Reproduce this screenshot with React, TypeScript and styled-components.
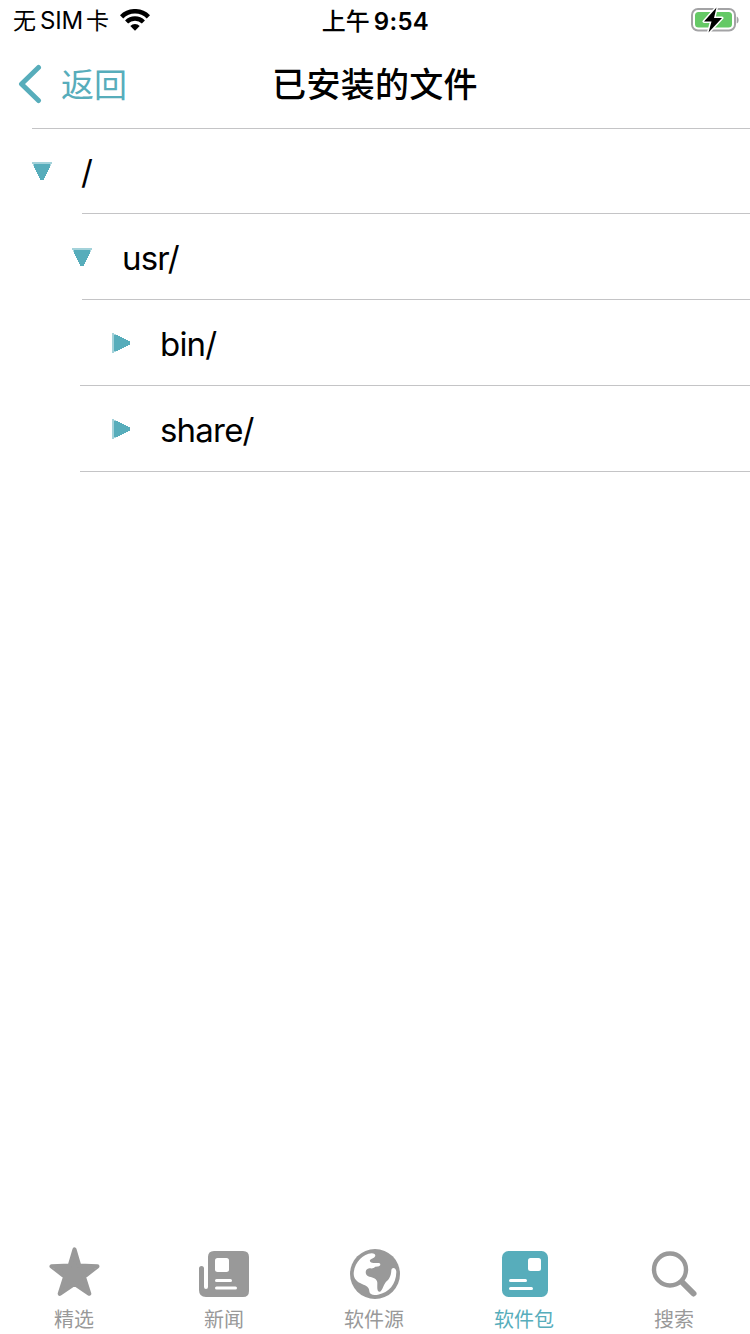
import React from "react";
import styled, { createGlobalStyle } from "styled-components";

const TEAL = "#57adbb";
const GRAY = "#999999";

const GlobalStyle = createGlobalStyle`
  * { box-sizing: border-box; }
  body { margin: 0; background: #fff; }
`;

const Screen = styled.div`
  width: 750px;
  height: 1334px;
  display: flex;
  flex-direction: column;
  background: #fff;
  color: #000;
  overflow: hidden;
  font-family: Inter, "Noto Sans CJK SC", sans-serif;
`;

const StatusBar = styled.header`
  height: 40px;
  display: grid;
  grid-template-columns: 1fr auto 1fr;
  align-items: center;
  padding: 0 11px 0 13px;
  line-height: 40px;
`;

const Carrier = styled.div`
  display: flex;
  align-items: center;
  font-size: 23px;
  padding-top: 1px;
  svg { margin: -2px 0 0 11px; }
`;

const Latin = styled.span`
  font-size: 24px;
  letter-spacing: -0.2px;
  margin: 0 3px 0 4px;
`;

const Clock = styled.div`
  font-size: 24px;
  font-weight: 500;
  padding-top: 1px;
  margin-left: -1px;
  height: 40px;
`;

const ClockDigits = styled.span`
  font-weight: 600;
  letter-spacing: 0.3px;
  margin-left: 4px;
`;

const Battery = styled.div`
  justify-self: end;
  display: flex;
  margin-top: -1px;
`;

const NavBar = styled.nav`
  height: 88px;
  display: grid;
  grid-template-columns: 1fr auto 1fr;
  align-items: center;
  padding: 0 17px;
`;

const BackButton = styled.button`
  display: flex;
  align-items: center;
  gap: 19px;
  padding: 0;
  border: 0;
  background: none;
  color: ${TEAL};
  font: inherit;
  font-size: 33px;
  line-height: 50px;
`;

const BackLabel = styled.span`
  padding-top: 1px;
`;

const Title = styled.h1`
  margin: 0;
  padding-top: 2px;
  font-size: 34px;
  font-weight: 500;
  letter-spacing: 0.3px;
  line-height: 50px;
`;

const FileList = styled.ul`
  flex: 1;
  margin: 0;
  padding: 0;
  list-style: none;
`;

const TopRule = styled.li`
  height: 1px;
  margin-left: 32px;
  background: #c4c4c6;
`;

const Row = styled.li<{ $rule: number; $height: number }>`
  height: ${(p) => p.$height}px;
  display: flex;
  flex-direction: column;
  &::after {
    content: "";
    height: 1px;
    margin-left: ${(p) => p.$rule}px;
    background: #c4c4c6;
  }
`;

const RowBody = styled.div<{ $indent: number; $gap: number }>`
  flex: 1;
  display: flex;
  align-items: center;
  padding-left: ${(p) => p.$indent}px;
  gap: ${(p) => p.$gap}px;
`;

const FileName = styled.span`
  font-size: 33px;
  line-height: 44px;
  letter-spacing: -0.8px;
  padding-top: 2px;
`;

const TabBar = styled.footer`
  height: 98px;
  display: grid;
  grid-template-columns: repeat(5, 1fr);
`;

const Tab = styled.div<{ $active?: boolean }>`
  display: flex;
  flex-direction: column;
  align-items: center;
  padding-top: 10px;
  color: ${(p) => (p.$active ? TEAL : GRAY)};
`;

const TabLabel = styled.span`
  font-size: 20px;
  line-height: 24px;
  margin-top: 8px;
  margin-right: 2px;
  white-space: nowrap;
`;

const steps = [
  [2, 2, 2], [2.5, 4, 2], [3.5, 6, 2], [4.5, 8, 2], [5.5, 10, 2], [6.5, 12, 2], [7.5, 14, 2], [8.5, 16, 2],
];

function Disclosure({ open }: { open: boolean }) {
  return (
    <svg width="20" height={open ? 18 : 20} viewBox={open ? "0 0 20 18" : "0 0 20 20"}>
      <g transform={open ? undefined : "matrix(0 1 1 0 0 0)"} fill={TEAL}>
        <rect width="20" height="2" opacity="0.55" />
        {steps.map(([x, y, h]) => (
          <rect key={y} x={x - 0.5} y={y} width={21 - 2 * x} height={h} />
        ))}
      </g>
    </svg>
  );
}

const WifiIcon = () => (
  <svg width="30" height="22" viewBox="0 0 30 22" fill="none" stroke="#000">
    <path d="M1.6 7.8a19 19 0 0 1 26.8 0" strokeWidth="4.6" />
    <path d="M6.6 13a12 12 0 0 1 16.8 0" strokeWidth="4.4" />
    <path d="M15 21.7l-4.7-4.7a6.7 6.7 0 0 1 9.4 0z" fill="#000" stroke="none" />
  </svg>
);

const BatteryIcon = () => (
  <svg width="48" height="28" viewBox="0 0 48 28">
    <rect x="1" y="3" width="43" height="21.5" rx="6" fill="none" stroke="#a3a3a5" strokeWidth="2" />
    <rect x="4" y="6" width="37" height="15.5" rx="3.5" fill="#65c966" />
    <path d="M45.7 10.5c2.6 1 2.6 6 0 7z" fill="#a3a3a5" />
    <path d="M25.5 1.5L13 15.5h7.5l-3 11L31 12h-8z" fill="#000" stroke="#fff" strokeWidth="3" paintOrder="stroke" strokeLinejoin="round" />
  </svg>
);

const BackIcon = () => (
  <svg width="25" height="40" viewBox="0 0 25 40" fill="none" stroke="currentColor" strokeWidth="5" strokeLinecap="round" strokeLinejoin="round">
    <path d="M21.5 3.5L4.5 20l17 16.500" />
  </svg>
);

const StarIcon = () => (
  <svg width="52" height="54" viewBox="0 0 52 54" fill="currentColor" stroke="currentColor" strokeWidth="4.2" strokeLinejoin="round">
    <path d="M25.5 3.500L30.200 19.700L48.400 20.300L34.900 30.800L40.200 47.700L25.500 37.700L10.800 47.700L16.100 30.800L2.600 20.300L20.800 19.700Z" />
  </svg>
);

const NewsIcon = () => (
  <svg width="52" height="54" viewBox="1 0 52 54" fill="currentColor">
    <path d="M16 5h29q6 0 6 6v34q0 6-6 6H8q-7 0-7-7V22.500q0-2.500 2.500-2.500T6 22.500V41q0 2 2 2t2-2V11q0-6 6-6z" />
    <g fill="#fff">
      <rect x="17" y="12" width="14" height="14" rx="2.500" />
      <rect x="17" y="33" width="17" height="3" rx="1.500" />
      <rect x="17" y="40.500" width="22" height="3" rx="1.500" />
    </g>
  </svg>
);

const GlobeIcon = () => (
  <svg width="52" height="54" viewBox="42 30 156 162">
    <circle cx="120" cy="114" r="75" fill="currentColor" />
    <path
      fill="#fff"
      d="M110 52C84 53 58 80 56 112C56 128 65 138 81 144C94 149 103 154 103 166C104 176 115 179 129 176C162 170 183 145 184 108C184 94 170 92 169 103C168 122 162 130 151 140C145 148 141 166 134 167C125 168 127 152 127 140C126 128 115 124 103 122C88 119 89 98 103 97C113 98 116 97 119 94C123 90 136 94 136 85C136 79 127 81 116 81C104 81 101 73 109 69C121 66 128 54 110 52Z"
    />
  </svg>
);

const PackageIcon = () => (
  <svg width="52" height="54" viewBox="0 0 52 54">
    <rect x="3" y="5" width="46" height="46" rx="6.500" fill="currentColor" />
    <g fill="#fff">
      <rect x="29" y="12" width="13" height="13" rx="2.500" />
      <rect x="10" y="33" width="18" height="3" rx="1.500" />
      <rect x="10" y="41" width="24" height="3" rx="1.500" />
    </g>
  </svg>
);

const SearchIcon = () => (
  <svg width="52" height="54" viewBox="0 0 52 54" fill="none" stroke="currentColor" strokeLinecap="round">
    <circle cx="21" cy="23.500" r="16" strokeWidth="4.400" />
    <path d="M33.500 36.500L44.500 47.500" strokeWidth="6" />
  </svg>
);

const files = [
  { name: "/", open: true, indent: 32, gap: 29, rule: 82, height: 85 },
  { name: "usr/", open: true, indent: 72, gap: 30, rule: 82, height: 86 },
  { name: "bin/", open: false, indent: 112, gap: 28, rule: 80, height: 86 },
  { name: "share/", open: false, indent: 112, gap: 28, rule: 80, height: 86 },
];

const tabs = [
  { label: "精选", Icon: StarIcon },
  { label: "新闻", Icon: NewsIcon },
  { label: "软件源", Icon: GlobeIcon },
  { label: "软件包", Icon: PackageIcon, active: true },
  { label: "搜索", Icon: SearchIcon },
];

export default function App() {
  return (
    <>
      <GlobalStyle />
      <Screen>
        <StatusBar>
          <Carrier>
            无<Latin>SIM</Latin>卡
            <WifiIcon />
          </Carrier>
          <Clock>
            上午<ClockDigits>9:54</ClockDigits>
          </Clock>
          <Battery>
            <BatteryIcon />
          </Battery>
        </StatusBar>
        <NavBar>
          <BackButton>
            <BackIcon />
            <BackLabel>返回</BackLabel>
          </BackButton>
          <Title>已安装的文件</Title>
        </NavBar>
        <FileList>
          <TopRule />
          {files.map((f) => (
            <Row key={f.name} $rule={f.rule} $height={f.height}>
              <RowBody $indent={f.indent} $gap={f.gap}>
                <Disclosure open={f.open} />
                <FileName>{f.name}</FileName>
              </RowBody>
            </Row>
          ))}
        </FileList>
        <TabBar>
          {tabs.map(({ label, Icon, active }) => (
            <Tab key={label} $active={active}>
              <Icon />
              <TabLabel>{label}</TabLabel>
            </Tab>
          ))}
        </TabBar>
      </Screen>
    </>
  );
}
